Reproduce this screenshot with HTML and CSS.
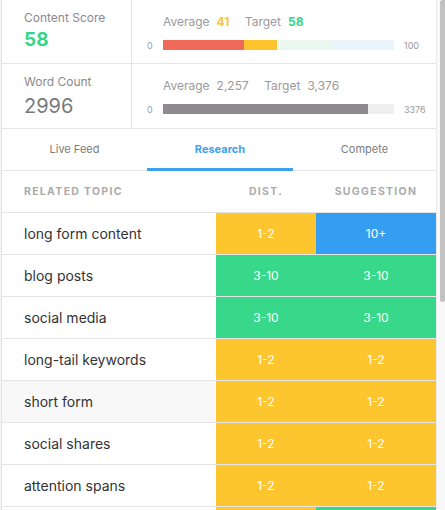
FILE: index.html
```html
<!DOCTYPE html>
<html lang="en">
  <head>
    <title>Content Research</title>
    <link rel="stylesheet" href="styles.css">
  </head>
  <body>
    <div class="page">
      <div class="panel">

        <!-- Score summary -->
        <div class="stat-row score-row">
          <div class="stat-name">
            <div class="stat-label">Content Score</div>
            <div class="stat-value score">58</div>
          </div>
          <div class="stat-bar">
            <div class="bar-legend">
              <span>Average</span><b class="num-avg">41</b>
              <span class="legend-target">Target</span><b class="num-target">58</b>
            </div>
            <div class="bar-line">
              <span class="bar-min">0</span>
              <div class="bar">
                <div class="seg seg-red" style="width:35%"></div>
                <div class="seg seg-yellow" style="width:14.3%"></div>
                <div class="seg seg-mint" style="width:23.4%"></div>
                <div class="seg seg-sky"></div>
              </div>
              <span class="bar-max">100</span>
            </div>
          </div>
        </div>

        <div class="stat-row count-row">
          <div class="stat-name">
            <div class="stat-label">Word Count</div>
            <div class="stat-value count">2996</div>
          </div>
          <div class="stat-bar">
            <div class="bar-legend">
              <span>Average</span><span class="num-plain">2,257</span>
              <span class="legend-target">Target</span><span class="num-plain">3,376</span>
            </div>
            <div class="bar-line">
              <span class="bar-min">0</span>
              <div class="bar bar-grey">
                <div class="seg seg-dark" style="width:88.7%"></div>
              </div>
              <span class="bar-max">3376</span>
            </div>
          </div>
        </div>

        <!-- Tabs -->
        <div class="tabs">
          <div class="tab">Live Feed</div>
          <div class="tab active">Research</div>
          <div class="tab">Compete</div>
        </div>

        <!-- Topics table -->
        <div class="topic-head">
          <div class="th th-topic">Related Topic</div>
          <div class="th">Dist.</div>
          <div class="th">Suggestion</div>
        </div>

        <div class="topic-row">
          <div class="topic">long form content</div>
          <div class="cell yellow">1-2</div>
          <div class="cell blue">10+</div>
        </div>
        <div class="topic-row">
          <div class="topic">blog posts</div>
          <div class="cell green">3-10</div>
          <div class="cell green">3-10</div>
        </div>
        <div class="topic-row">
          <div class="topic">social media</div>
          <div class="cell green">3-10</div>
          <div class="cell green">3-10</div>
        </div>
        <div class="topic-row">
          <div class="topic">long-tail keywords</div>
          <div class="cell yellow">1-2</div>
          <div class="cell yellow">1-2</div>
        </div>
        <div class="topic-row hover">
          <div class="topic">short form</div>
          <div class="cell yellow">1-2</div>
          <div class="cell yellow">1-2</div>
        </div>
        <div class="topic-row">
          <div class="topic">social shares</div>
          <div class="cell yellow">1-2</div>
          <div class="cell yellow">1-2</div>
        </div>
        <div class="topic-row">
          <div class="topic">attention spans</div>
          <div class="cell yellow">1-2</div>
          <div class="cell yellow">1-2</div>
        </div>
        <div class="topic-row">
          <div class="topic"></div>
          <div class="cell yellow"></div>
          <div class="cell green"></div>
        </div>

      </div>

      <!-- scrollbar of the list -->
      <div class="scroll-track">
        <div class="scroll-thumb"></div>
      </div>
    </div>
  </body>
</html>
```

FILE: styles.css
```css
body { margin: 0; font-family: Inter, "Liberation Sans", sans-serif; color: #333; }

.page {
  display: flex;
  width: 445px;
  height: 510px;
  overflow: hidden;
  background: #f4f4f4;
}

.panel {
  width: 434px;
  flex: none;
  margin-left: 1px;
  border-left: 1px solid #e4e4e4;
  background: #fff;
}

/* Thin grey scrollbar at the right */
.scroll-track {
  flex: 1;
  border-left: 1px solid #ececec;
  background: #f8f8f8;
  padding-left: 3px;
}
.scroll-thumb {
  height: 302px;
  background: #c2c2c2;
  border-radius: 3px 0 3px 3px;
}

/* Score / word count rows */
.stat-row {
  display: grid;
  grid-template-columns: 130px 1fr;
  border-bottom: 1px solid #e6e6e6;
}
.score-row { height: 63px; }
.count-row { height: 64px; }

.stat-name {
  border-right: 1px solid #e6e6e6;
  padding: 10px 0 0 22px;
}
.stat-label { font-size: 12px; line-height: 15px; color: #8b8b8b; }
.stat-value { margin-top: 4px; }
.score { font-size: 19px; line-height: 22px; font-weight: 700; color: #36d68a; }
.count { font-size: 20px; line-height: 24px; color: #7a7a7a; margin-top: 5px; }

.stat-bar { padding: 14px 0 0 15px; }
.bar-legend {
  padding-left: 16px;
  font-size: 12px;
  line-height: 16px;
  color: #9a9a9a;
}
.bar-legend b, .bar-legend .num-plain { margin-left: 7px; }
.legend-target { margin-left: 12px; }
.num-avg { color: #fcc42d; font-weight: 700; }
.num-target { color: #36d68a; font-weight: 700; }
.num-plain { color: #9a9a9a; }

.bar-line {
  display: flex;
  align-items: center;
  margin-top: 10px;
  height: 10px;
}
.bar-min { width: 16px; font-size: 9px; color: #9a9a9a; }
.bar-max { margin-left: 10px; font-size: 9px; color: #9a9a9a; }
.bar { display: flex; width: 231px; height: 10px; }
.bar-grey { background: #efefef; }
.seg { height: 100%; }
.seg-red { background: #ef6a5a; }
.seg-yellow { background: #fdc42e; }
.seg-mint { background: #edf7f2; }
.seg-sky { flex: 1; background: #ebf3fb; }
.seg-dark { background: #8e8a8d; }

/* Tabs */
.tabs {
  display: grid;
  grid-template-columns: 145px 146px 1fr;
  height: 41px;
  border-bottom: 1px solid #e6e6e6;
}
.tab {
  display: flex;
  align-items: center;
  justify-content: center;
  padding-bottom: 2px;
  font-size: 11px;
  color: #7c7c7c;
}
.tab.active {
  color: #3ca2f0;
  font-weight: 700;
  border-bottom: 3px solid #3ca2f0;
  padding-bottom: 0;
  margin-bottom: -1px;
}

/* Topics table */
.topic-head, .topic-row {
  display: grid;
  grid-template-columns: 1fr 100px 120px;
  height: 41px;
  border-bottom: 1px solid #e4e4e4;
}
.th {
  display: flex;
  align-items: center;
  justify-content: center;
  font-size: 10.5px;
  font-weight: 700;
  letter-spacing: 1.3px;
  text-transform: uppercase;
  color: #ababab;
}
.th-topic { justify-content: flex-start; padding-left: 22px; }

.topic {
  display: flex;
  align-items: center;
  padding-left: 22px;
  font-size: 14px;
  color: #333;
}
.topic-row.hover { background: #f8f8f8; }

.cell {
  display: flex;
  align-items: center;
  justify-content: center;
  font-size: 12px;
  color: #fff;
}
.yellow { background: #fdc62f; }
.green { background: #38d88a; }
.blue { background: #369ef0; }
```
